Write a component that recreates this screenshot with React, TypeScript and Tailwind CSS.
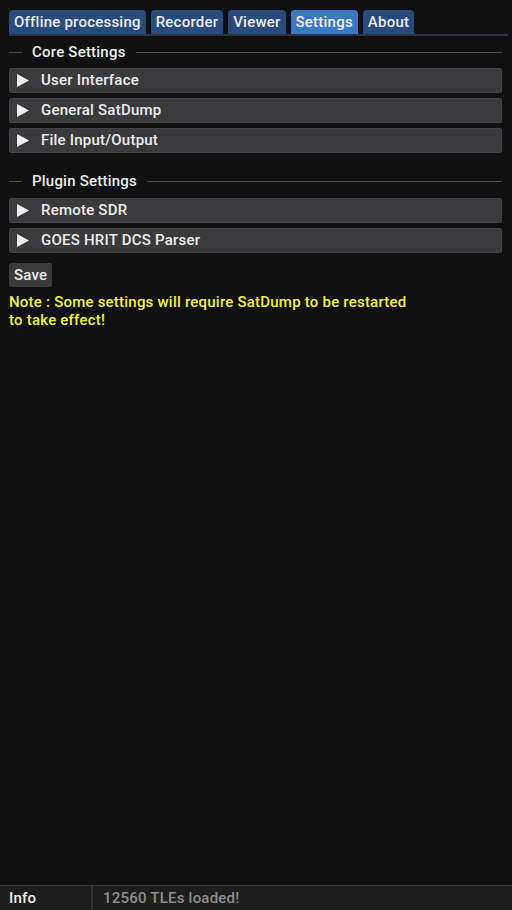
import React from "react";

const font = { fontFamily: "Roboto, 'Noto Sans', sans-serif", letterSpacing: "0.22px" };

function Tab({ label, active }: { label: string; active?: boolean }) {
  return (
    <div
      className={
        "h-[24px] px-[5px] flex items-center rounded-t-[4px] text-[15px] font-medium text-[#ececec] leading-none " +
        (active ? "bg-[#3b78c4]" : "bg-[#284a7c]")
      }
    >
      {label}
    </div>
  );
}

function SeparatorText({ label }: { label: string }) {
  return (
    <div className="flex items-center h-[18px] mr-[10px]">
      <div className="w-[13px] h-[1px] bg-[#4a4a52]" />
      <div className="px-[10px] text-[15px] font-medium text-[#ececec] leading-none">{label}</div>
      <div className="flex-1 h-[1px] bg-[#4a4a52]" />
    </div>
  );
}

function Header({ label }: { label: string }) {
  return (
    <div className="h-[25px] mr-[10px] bg-[#3a3a3d] border border-[#444448] rounded-[2px] flex items-center">
      <svg width="12" height="13" viewBox="0 0 12 13" className="ml-[7px]">
        <polygon points="0,0 12,6.5 0,13" fill="#f0f0f0" />
      </svg>
      <span className="ml-[12px] text-[15px] font-medium text-[#ececec] leading-none">{label}</span>
    </div>
  );
}

export default function App() {
  return (
    <div style={font} className="w-[512px] h-[910px] bg-[#101010] flex flex-col overflow-hidden">
      <div className="flex-1 pl-[9px] pt-[10px]">
        <div className="flex gap-[5px] border-b-[2px] border-[#2a3444] mr-[4px]">
          <Tab label="Offline processing" />
          <Tab label="Recorder" />
          <Tab label="Viewer" />
          <Tab label="Settings" active />
          <Tab label="About" />
        </div>
        <div className="mt-[7px]">
          <SeparatorText label="Core Settings" />
        </div>
        <div className="mt-[7px] flex flex-col gap-[5px]">
          <Header label="User Interface" />
          <Header label="General SatDump" />
          <Header label="File Input/Output" />
        </div>
        <div className="mt-[19px]">
          <SeparatorText label="Plugin Settings" />
        </div>
        <div className="mt-[8px] flex flex-col gap-[5px]">
          <Header label="Remote SDR" />
          <Header label="GOES HRIT DCS Parser" />
        </div>
        <div className="mt-[10px] flex">
          <div className="h-[24px] px-[5px] bg-[#3a3a3a] rounded-[2px] flex items-center text-[15px] font-medium text-[#ececec] leading-none">
            Save
          </div>
        </div>
        <div className="mt-[6px] text-[15px] font-medium leading-[18px] text-[#f2f23a]">
          Note : Some settings will require SatDump to be restarted
          <br />
          to take effect!
        </div>
      </div>
      <div className="h-[25px] border-t border-[#3a3a3a] bg-[#1e1e1e] flex">
        <div className="w-[93px] border-r-[2px] border-[#333] flex items-center pl-[9px] text-[15px] font-medium text-[#ececec] leading-none">
          Info
        </div>
        <div className="flex-1 flex items-center pl-[10px] text-[15px] font-medium text-[#8e8e8e] leading-none">
          12560 TLEs loaded!
        </div>
      </div>
    </div>
  );
}
